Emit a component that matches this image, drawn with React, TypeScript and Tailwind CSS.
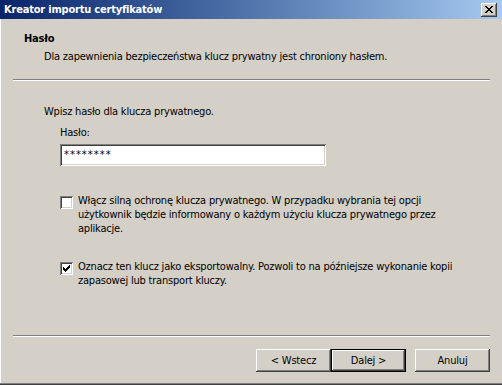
const raised =
  "shadow-[inset_-1px_-1px_#404040,inset_1px_1px_#ffffff,inset_-2px_-2px_#808080,inset_2px_2px_#d4d0c8]";
const sunken =
  "shadow-[inset_1px_1px_#808080,inset_-1px_-1px_#ffffff,inset_2px_2px_#404040,inset_-2px_-2px_#d4d0c8]";

function Etched() {
  return (
    <div className="mx-[12px] h-[2px] border-t border-b border-t-[#808080] border-b-white" />
  );
}

function CloseButton() {
  return (
    <div className={`mr-[5px] flex h-[14px] w-[16px] items-center justify-center bg-[#d4d0c8] ${raised}`}>
      <svg width="8" height="7" viewBox="0 0 8 7" shapeRendering="crispEdges">
        <path
          fill="#000"
          d="M0 0h2v1H0zM6 0h2v1H6zM1 1h2v1H1zM5 1h2v1H5zM2 2h4v1H2zM3 3h2v1H3zM2 4h4v1H2zM1 5h2v1H1zM5 5h2v1H5zM0 6h2v1H0zM6 6h2v1H6z"
        />
      </svg>
    </div>
  );
}

function Checkbox({ checked }: { checked?: boolean }) {
  return (
    <div className={`mt-[2px] flex h-[13px] w-[13px] shrink-0 items-center justify-center bg-white ${sunken}`}>
      {checked && (
        <svg width="7" height="7" viewBox="0 0 7 7" shapeRendering="crispEdges">
          <path
            fill="#000"
            d="M6 0h1v3H6zM5 1h1v3H5zM4 2h1v3H4zM3 3h1v3H3zM2 4h1v3H2zM1 3h1v3H1zM0 2h1v3H0z"
          />
        </svg>
      )}
    </div>
  );
}

function Button({ label, primary }: { label: string; primary?: boolean }) {
  return (
    <div
      className={`flex h-[23px] w-[75px] items-center justify-center bg-[#d4d0c8] ${
        primary
          ? "shadow-[inset_0_0_0_1px_#000000,inset_-2px_-2px_#404040,inset_2px_2px_#ffffff,inset_-3px_-3px_#808080]"
          : raised
      }`}
    >
      {label}
    </div>
  );
}

export default function App() {
  return (
    <div className="flex h-[385px] w-[502px] flex-col bg-[#d4d0c8] font-['Tahoma','DejaVu_Sans_Condensed','DejaVu_Sans',sans-serif] text-[11px] leading-[14px] tracking-[-0.2px] text-black">
      <div className="flex h-[19px] shrink-0 items-center justify-between bg-gradient-to-r from-[#0a246a] to-[#a6caf0]">
        <span className="pl-[4px] font-bold text-white">Kreator importu certyfikatów</span>
        <CloseButton />
      </div>

      <div className="flex flex-1 flex-col border-l border-l-white">
        <div className="mt-[13px] pl-[23px] font-bold">Hasło</div>
        <div className="mt-[4px] pl-[43px]">
          Dla zapewnienia bezpieczeństwa klucz prywatny jest chroniony hasłem.
        </div>
        <div className="mt-[15px]">
          <Etched />
        </div>

        <div className="mt-[24px] pl-[43px]">Wpisz hasło dla klucza prywatnego.</div>
        <div className="mt-[7px] pl-[59px]">Hasło:</div>
        <div className="mt-[4px] pl-[59px]">
          <div className={`flex h-[22px] w-[266px] items-center bg-white pl-[4px] tracking-[1px] ${sunken}`}>
            ********
          </div>
        </div>

        <div className="mt-[28px] flex gap-[5px] pl-[59px] pr-[12px]">
          <Checkbox />
          <p>
            Włącz silną ochronę klucza prywatnego. W przypadku wybrania tej opcji
            <br />
            użytkownik będzie informowany o każdym użyciu klucza prywatnego przez
            <br />
            aplikacje.
          </p>
        </div>

        <div className="mt-[24px] flex gap-[5px] pl-[59px] pr-[12px]">
          <Checkbox checked />
          <p>
            Oznacz ten klucz jako eksportowalny. Pozwoli to na późniejsze wykonanie kopii
            <br />
            zapasowej lub transport kluczy.
          </p>
        </div>

        <div className="mt-auto">
          <Etched />
        </div>
        <div className="mt-[12px] mb-[11px] flex justify-end pr-[12px]">
          <Button label="< Wstecz" />
          <Button label="Dalej >" primary />
          <div className="ml-[9px]">
            <Button label="Anuluj" />
          </div>
        </div>
      </div>
      <div className="h-[2px] shrink-0 border-t border-b border-t-[#808080] border-b-[#404040]" />
    </div>
  );
}
